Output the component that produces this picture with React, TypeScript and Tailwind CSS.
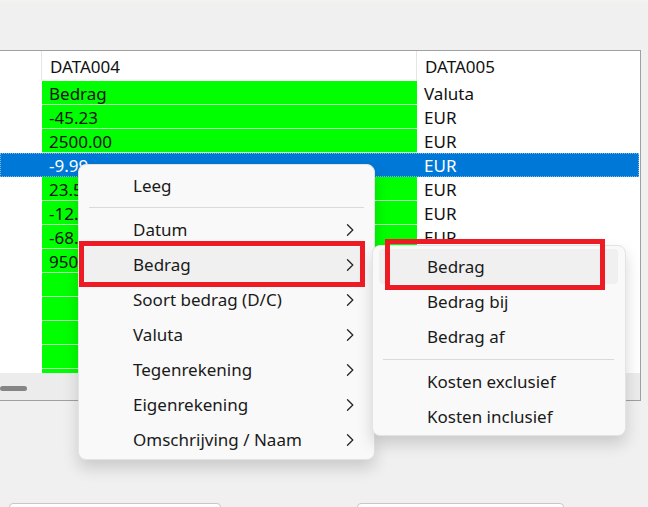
import React from "react";

const font = { fontFamily: '"Noto Sans", "Open Sans", sans-serif' };

const rows: [string, string][] = [
  ["Bedrag", "Valuta"],
  ["-45.23", "EUR"],
  ["2500.00", "EUR"],
  ["-9.99", "EUR"],
  ["23.50", "EUR"],
  ["-12.40", "EUR"],
  ["-68.00", "EUR"],
  ["950.00", "EUR"],
  ["", ""],
  ["", ""],
  ["", ""],
  ["", ""],
  ["", ""],
];

function Chevron() {
  return (
    <svg width="8" height="12" viewBox="0 0 8 12" className="shrink-0">
      <path d="M1.5 0.8 L6.8 6 L1.5 11.2" fill="none" stroke="#262626" strokeWidth="1.3" strokeLinecap="round" strokeLinejoin="round" />
    </svg>
  );
}

function MainItem({ label, sub, active }: { label: string; sub?: boolean; active?: boolean }) {
  return (
    <div
      className={`relative ml-[5px] mr-[11px] flex h-[35px] items-center rounded-[4px] pl-[49px] pr-[9px] ${
        active ? "bg-[#f0f0f0]" : ""
      }`}
    >
      <span className="flex-1 text-[17px] text-[#1a1a1a]">{label}</span>
      {sub && <Chevron />}
    </div>
  );
}

function SubItem({ label, active }: { label: string; active?: boolean }) {
  return (
    <div
      className={`ml-[6px] mr-[7px] flex h-[35px] items-center rounded-[4px] pl-[48px] ${
        active ? "bg-[#f0f0f0]" : ""
      }`}
    >
      <span className="text-[17px] text-[#1a1a1a]">{label}</span>
    </div>
  );
}

export default function App() {
  return (
    <div className="relative h-[507px] w-[648px] overflow-hidden bg-[#f0f0f0]" style={font}>
      <div className="h-[3px] bg-[#f3f2ee]" />
      {/* Grid */}
      <div className="mt-[47px] flex h-[351px] w-[641px] flex-col border-y border-r border-[#a0a0a0] bg-white">
        <div className="flex h-[30px] shrink-0 text-[17px] text-[#111]">
          <div className="w-[42px] border-r border-[#e5e5e5]" />
          <div className="flex w-[375px] items-center border-r border-[#e5e5e5] pl-[8px] pt-[2px]">DATA004</div>
          <div className="flex flex-1 items-center pl-[8px] pt-[2px]">DATA005</div>
        </div>
        <div className="h-[292px] shrink-0 overflow-hidden">
          {rows.map((r, i) =>
            i === 3 ? (
              <div
                key={i}
                className="flex h-[24px] w-[639px] items-center border border-dotted border-[#7fb6e8] bg-[#0078d7] text-[17px] text-white"
              >
                <div className="w-[41px]" />
                <div className="w-[375px] pl-[7px] pt-[2px] leading-[22px]">{r[0]}</div>
                <div className="flex-1 pl-[7px] pt-[2px] leading-[22px]">{r[1]}</div>
              </div>
            ) : (
              <div key={i} className="flex h-[24px] text-[17px] text-[#111]">
                <div className="w-[42px]" />
                <div className="w-[375px] border-b border-[#b4f8b4] bg-[#00ff00] pl-[7px] pt-[2px] leading-[22px]">{r[0]}</div>
                <div className="flex-1 pl-[7px] pt-[2px] leading-[22px]">{r[1]}</div>
              </div>
            )
          )}
        </div>
        <div className="relative flex-1 bg-[#ececec]">
          <div className="absolute left-0 top-[13px] h-[5px] w-[27px] rounded-full bg-[#858585]" />
        </div>
      </div>

      {/* bottom inputs */}
      <div className="mt-[102px] flex">
        <div className="ml-[9px] h-[10px] w-[212px] rounded-[4px] border border-[#c8c8c8] bg-white" />
        <div className="ml-[136px] h-[10px] w-[207px] rounded-[4px] border border-[#c8c8c8] bg-white" />
      </div>

      {/* Main context menu */}
      <div className="absolute left-[78px] top-[164px] w-[297px] rounded-[8px] border border-[#e3e3e3] bg-[#f9f9f9] pb-[2px] pt-[3px] shadow-[0_8px_16px_rgba(0,0,0,0.16)]">
        <MainItem label="Leeg" />
        <div className="flex h-[9px] items-center px-[10px]">
          <div className="h-px flex-1 bg-[#dadada]" />
        </div>
        <MainItem label="Datum" sub />
        <MainItem label="Bedrag" sub active />
        <MainItem label="Soort bedrag (D/C)" sub />
        <MainItem label="Valuta" sub />
        <MainItem label="Tegenrekening" sub />
        <MainItem label="Eigenrekening" sub />
        <MainItem label="Omschrijving / Naam" sub />
      </div>

      {/* Submenu */}
      <div className="absolute left-[372px] top-[245px] w-[254px] rounded-[8px] border border-[#e3e3e3] bg-[#f9f9f9] pb-[1px] pt-[3px] shadow-[0_8px_16px_rgba(0,0,0,0.16)]">
        <SubItem label="Bedrag" active />
        <SubItem label="Bedrag bij" />
        <SubItem label="Bedrag af" />
        <div className="flex h-[10px] items-center pl-[10px] pr-[11px]">
          <div className="h-px flex-1 bg-[#dadada]" />
        </div>
        <SubItem label="Kosten exclusief" />
        <SubItem label="Kosten inclusief" />
      </div>

      {/* Red annotation boxes */}
      <div className="pointer-events-none absolute left-[79px] top-[241px] h-[46px] w-[286px] border-[5px] border-[#ed1c24]" />
      <div className="pointer-events-none absolute left-[385px] top-[239px] h-[51px] w-[220px] border-[5px] border-[#ed1c24]" />
    </div>
  );
}
